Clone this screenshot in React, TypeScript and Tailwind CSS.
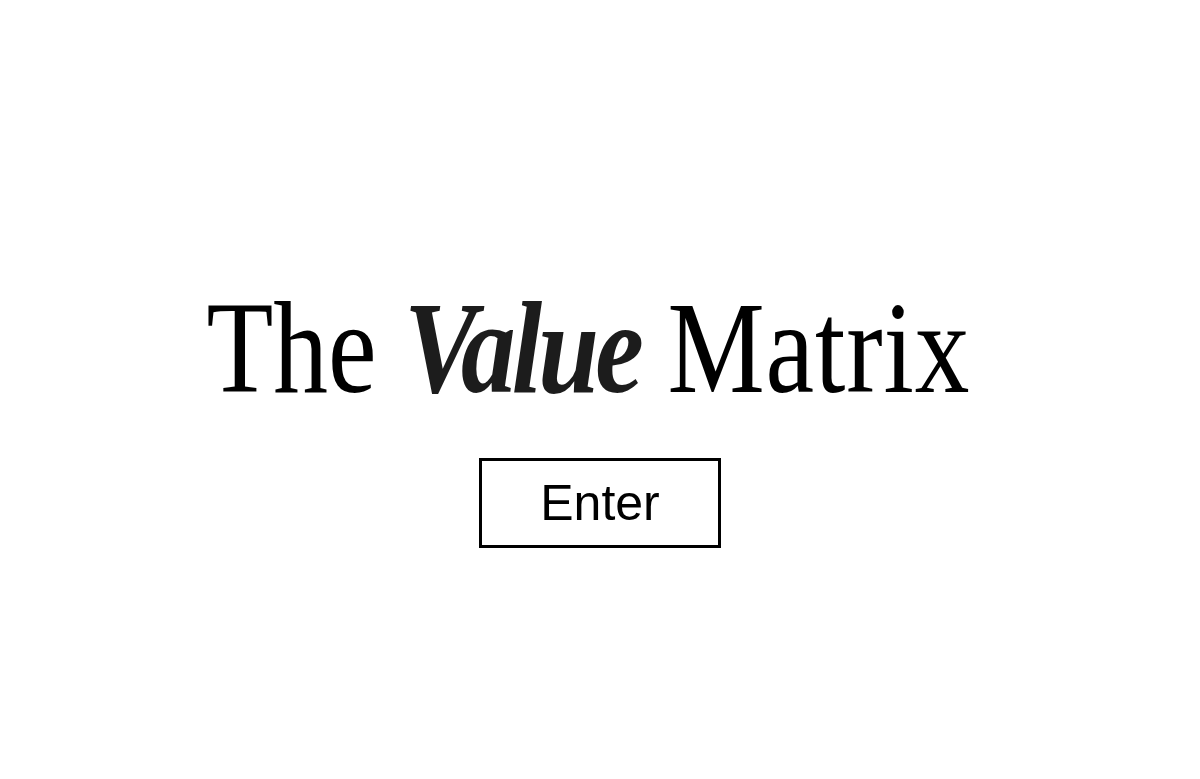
export default function App() {
  return (
    <div className="min-h-screen w-full bg-white flex flex-col items-center pt-[282px]">
      {/* título: serif condensada, con "Value" en cursiva negra */}
      <h1
        className="text-[131px] leading-none text-black whitespace-nowrap scale-x-[0.835] -translate-x-[12px]"
        style={{ fontFamily: '"Liberation Serif", "Times New Roman", serif' }}
      >
        <span>The</span>{" "}
        <span className="italic font-bold text-[#1c1c1c] tracking-[-0.035em]">Value</span>{" "}
        <span className="tracking-[0.008em]">Matrix</span>
      </h1>

      <button
        type="button"
        className="mt-[45px] w-[242px] h-[90px] border-[3px] border-black bg-white flex items-center justify-center text-[50px] leading-none text-black"
        style={{ fontFamily: '"Liberation Sans", Arial, sans-serif' }}
      >
        Enter
      </button>
    </div>
  );
}
